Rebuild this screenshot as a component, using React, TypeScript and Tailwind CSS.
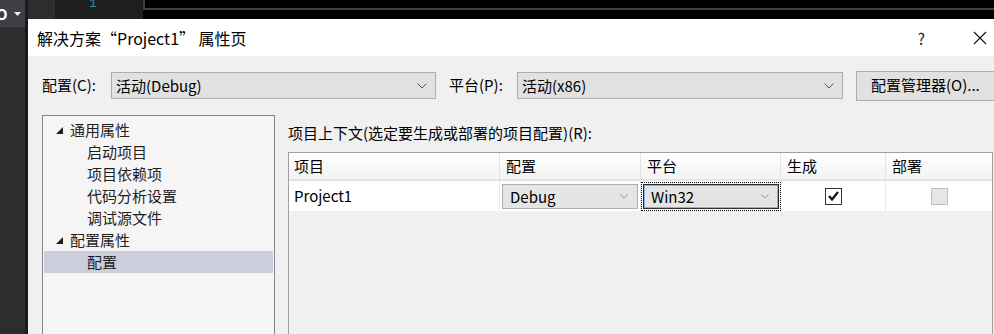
const FONT = "font-['Microsoft_YaHei_UI','Noto_Sans_CJK_SC',sans-serif]"

const TREE = [
  { label: '通用属性', level: 0 },
  { label: '启动项目', level: 1 },
  { label: '项目依赖项', level: 1 },
  { label: '代码分析设置', level: 1 },
  { label: '调试源文件', level: 1 },
  { label: '配置属性', level: 0 },
  { label: '配置', level: 1, selected: true },
]

function Chevron({ small }: { small?: boolean }) {
  return (
    <svg width={small ? 8 : 10} height={small ? 5 : 6} viewBox="0 0 10 6" className="shrink-0">
      <path d="M0.5 0.5 L5 5 L9.5 0.5" fill="none" stroke={small ? '#777' : '#555'} strokeWidth="1" />
    </svg>
  )
}

function Combo({ text, width }: { text: string; width: string }) {
  return (
    <div className={`${width} shrink-0 h-[27px] flex items-center justify-between pl-[4px] pr-[8px] bg-[#e1e1e1] border border-[#adadad]`}>
      <span className="text-[15px] text-black leading-none">{text}</span>
      <Chevron />
    </div>
  )
}

function Triangle() {
  return (
    <svg width="9" height="9" viewBox="0 0 9 9" className="shrink-0">
      <path d="M8 1 L8 8 L1 8 Z" fill="#1e1e1e" />
    </svg>
  )
}

export default function App() {
  return (
    <div className={`w-[994px] h-[334px] overflow-hidden flex bg-[#1e1e1e] ${FONT}`}>
      {/* left strip of the IDE */}
      <div className="w-[28px] shrink-0 flex flex-col bg-[#2d2d30] border-r-[3px] border-[#1b1b1c]">
        <div className="h-[27px] bg-[#3f3f46] flex items-center gap-[6px] text-white -ml-[4px]">
          <span className="text-[15px] font-bold leading-none">O</span>
          <svg width="7" height="4" viewBox="0 0 7 4">
            <path d="M0 0 L7 0 L3.5 4 Z" fill="#f1f1f1" />
          </svg>
        </div>
      </div>

      <div className="flex-1 flex flex-col min-w-0">
        {/* editor strip */}
        <div className="h-[19px] shrink-0 flex">
          <div className="w-[27px] bg-[#2d2d30]" />
          <div className="w-[88px] bg-[#1e1e1e] relative overflow-hidden">
            <span className="absolute left-[34px] -top-[6px] text-[13px] text-[#2b91af] font-['Liberation_Mono',monospace]">1</span>
          </div>
          <div className="flex-1 flex flex-col">
            <div className="h-[10px] border-l-2 border-b-2 border-[#3f3f46] bg-black" />
            <div className="flex-1 bg-black" />
          </div>
        </div>

        {/* dialog */}
        <div className="flex-1 flex flex-col bg-[#f0f0f0] min-h-0">
          <div className="h-[37px] shrink-0 bg-white flex items-center pl-[9px] pr-[6px]">
            <span className="text-[16px] text-black flex-1">解决方案“Project1” 属性页</span>
            <span className="text-[16px] text-[#222] mr-[48px]">?</span>
            <svg width="14" height="14" viewBox="0 0 14 14" className="mr-[1px]">
              <path d="M1 1 L13 13 M13 1 L1 13" stroke="#111" strokeWidth="1.1" />
            </svg>
          </div>

          <div className="flex-1 flex flex-col pl-[14px] pt-[14px] min-h-0 overflow-hidden">
            {/* config / platform row */}
            <div className="flex items-center h-[31px]">
              <span className="w-[69px] shrink-0 text-[15px] text-black">配置(C):</span>
              <Combo text="活动(Debug)" width="w-[325px]" />
              <span className="w-[68px] shrink-0 ml-[13px] text-[15px] text-black">平台(P):</span>
              <Combo text="活动(x86)" width="w-[326px]" />
              <div className="ml-[13px] w-[160px] h-[30px] shrink-0 flex items-center pl-[14px] bg-[#e1e1e1] border border-[#adadad] text-[15px] text-black">
                配置管理器(O)...
              </div>
            </div>

            <div className="flex-1 flex mt-[14px] min-h-0">
              {/* tree */}
              <div className="w-[233px] shrink-0 bg-[#f5f5f5] border border-[#828790] border-b-0 pt-[3px] px-px">
                {TREE.map(item => (
                  <div
                    key={item.label}
                    className={`h-[22px] flex items-center text-[15px] text-[#1e1e1e] ${item.selected ? 'bg-[#cccedb]' : ''}`}
                  >
                    {item.level === 0 ? (
                      <div className="flex items-center pl-[11px] gap-[6px]">
                        <Triangle />
                        <span>{item.label}</span>
                      </div>
                    ) : (
                      <span className="pl-[43px]">{item.label}</span>
                    )}
                  </div>
                ))}
              </div>

              {/* project context */}
              <div className="flex-1 flex flex-col ml-[13px] min-w-0">
                <div className="h-[37px] flex items-center text-[15px] text-black">
                  项目上下文(选定要生成或部署的项目配置)(R):
                </div>
                <div className="flex-1 w-[705px] border-l border-t border-r border-[#a0a0a0] flex flex-col">
                  <div className="h-[28px] flex bg-gradient-to-b from-white to-[#f3f3f3] border-b-2 border-[#e3e3e3] text-[15px] text-black">
                    <div className="w-[211px] pl-[5px] flex items-center border-r border-[#e3e3e3]">项目</div>
                    <div className="w-[141px] pl-[6px] flex items-center border-r border-[#e3e3e3]">配置</div>
                    <div className="w-[140px] pl-[6px] flex items-center border-r border-[#e3e3e3]">平台</div>
                    <div className="w-[105px] pl-[6px] flex items-center border-r border-[#e3e3e3]">生成</div>
                    <div className="flex-1 pl-[6px] flex items-center">部署</div>
                  </div>
                  <div className="h-[30px] flex bg-white">
                    <div className="w-[211px] pl-[5px] flex items-center border-r border-[#e8e8e8] text-[15px] text-black">Project1</div>
                    <div className="w-[141px] flex items-center pl-[2px] border-r border-[#e8e8e8]">
                      <div className="w-[136px] h-[25px] flex items-center justify-between pl-[7px] pr-[9px] bg-[#e5e5e5] border border-[#adadad]">
                        <span className="text-[15px] text-black leading-none">Debug</span>
                        <Chevron small />
                      </div>
                    </div>
                    <div className="w-[140px] flex items-center">
                      <div className="w-[140px] h-[29px] flex items-center border border-dotted border-black p-px">
                        <div className="w-full h-[25px] flex items-center justify-between pl-[7px] pr-[9px] bg-[#e5e5e5] border border-[#2b2b2b] shadow-[inset_0_0_0_1px_#7eb4ea]">
                          <span className="text-[15px] text-black leading-none">Win32</span>
                          <Chevron small />
                        </div>
                      </div>
                    </div>
                    <div className="w-[105px] flex items-center justify-center border-r border-[#e8e8e8]">
                      <div className="w-[17px] h-[17px] bg-white border border-[#333] flex items-center justify-center">
                        <svg width="11" height="10" viewBox="0 0 11 10">
                          <path d="M1 5 L4 8.5 L10 1" fill="none" stroke="#111" strokeWidth="2.2" />
                        </svg>
                      </div>
                    </div>
                    <div className="flex-1 flex items-center justify-center">
                      <div className="w-[17px] h-[17px] bg-[#e6e6e6] border border-[#bcbcbc]" />
                    </div>
                  </div>
                  <div className="flex-1 bg-[#f0f0f0]" />
                </div>
              </div>
            </div>
          </div>
        </div>
      </div>
    </div>
  )
}
